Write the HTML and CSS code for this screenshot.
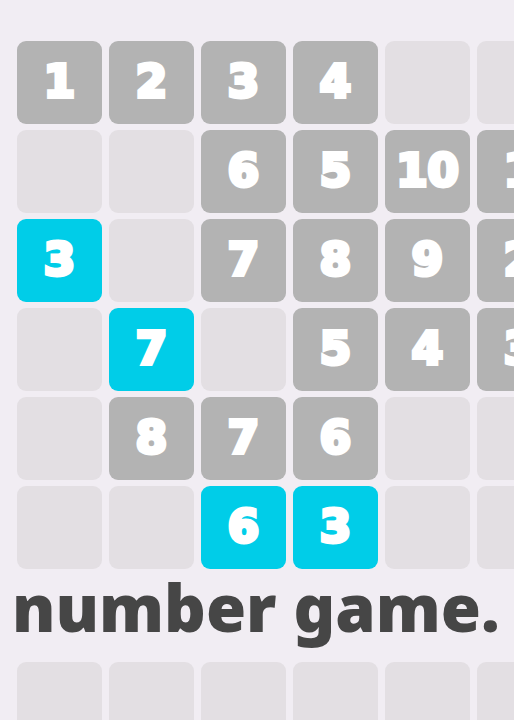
FILE: index.html
```html
<!DOCTYPE html>

<html lang="en">

  <head>

    <title>number game.</title>

    <meta charset="utf-8"/>
    <meta name="viewport" content="width=device-width, initial-scale=1"/>

    <link rel="stylesheet" href="styles.css">

  </head>

  <body>

    <main>
      <div class="board">
        <div class="tile used">1</div>
        <div class="tile used">2</div>
        <div class="tile used">3</div>
        <div class="tile used">4</div>
        <div class="tile"></div>
        <div class="tile"></div>

        <div class="tile"></div>
        <div class="tile"></div>
        <div class="tile used">6</div>
        <div class="tile used">5</div>
        <div class="tile used">10</div>
        <div class="tile used">1</div>

        <div class="tile active">3</div>
        <div class="tile"></div>
        <div class="tile used">7</div>
        <div class="tile used">8</div>
        <div class="tile used">9</div>
        <div class="tile used">2</div>

        <div class="tile"></div>
        <div class="tile active">7</div>
        <div class="tile"></div>
        <div class="tile used">5</div>
        <div class="tile used">4</div>
        <div class="tile used">3</div>

        <div class="tile"></div>
        <div class="tile used">8</div>
        <div class="tile used">7</div>
        <div class="tile used">6</div>
        <div class="tile"></div>
        <div class="tile"></div>

        <div class="tile"></div>
        <div class="tile"></div>
        <div class="tile active">6</div>
        <div class="tile active">3</div>
        <div class="tile"></div>
        <div class="tile"></div>
      </div>

      <h1>number game.</h1>

      <div class="board">
        <div class="tile"></div>
        <div class="tile"></div>
        <div class="tile"></div>
        <div class="tile"></div>
        <div class="tile"></div>
        <div class="tile"></div>
      </div>
    </main>

  </body>

</html>
```

FILE: styles.css
```css
body {
  margin: 0;
  background-color: #f1edf3;
  font-family: "Noto Sans", "Open Sans", sans-serif;
}
main {
  height: 100vh;
  padding-top: 41px;
  box-sizing: border-box;
  overflow: hidden;
}
/* the board runs off the right edge */
.board {
  display: grid;
  grid-template-columns: repeat(6, 85px);
  grid-auto-rows: 83px;
  gap: 6px 7px;
  padding-left: 17px;
}
.tile {
  display: flex;
  align-items: center;
  justify-content: center;
  box-sizing: border-box;
  padding-bottom: 3px;
  border-radius: 9px;
  background: #e3dfe3;
  color: white;
  font: bold 45px/1 "DejaVu Sans", sans-serif;
  -webkit-text-stroke: 4px white;
}
.used {
  background: #b3b3b3;
}
.active {
  background: #00cde8;
}
h1 {
  margin: 0 0 16px;
  padding-left: 12px;
  color: #464646;
  font-size: 65px;
  font-weight: 900;
  line-height: 77px;
  white-space: nowrap;
}
```
